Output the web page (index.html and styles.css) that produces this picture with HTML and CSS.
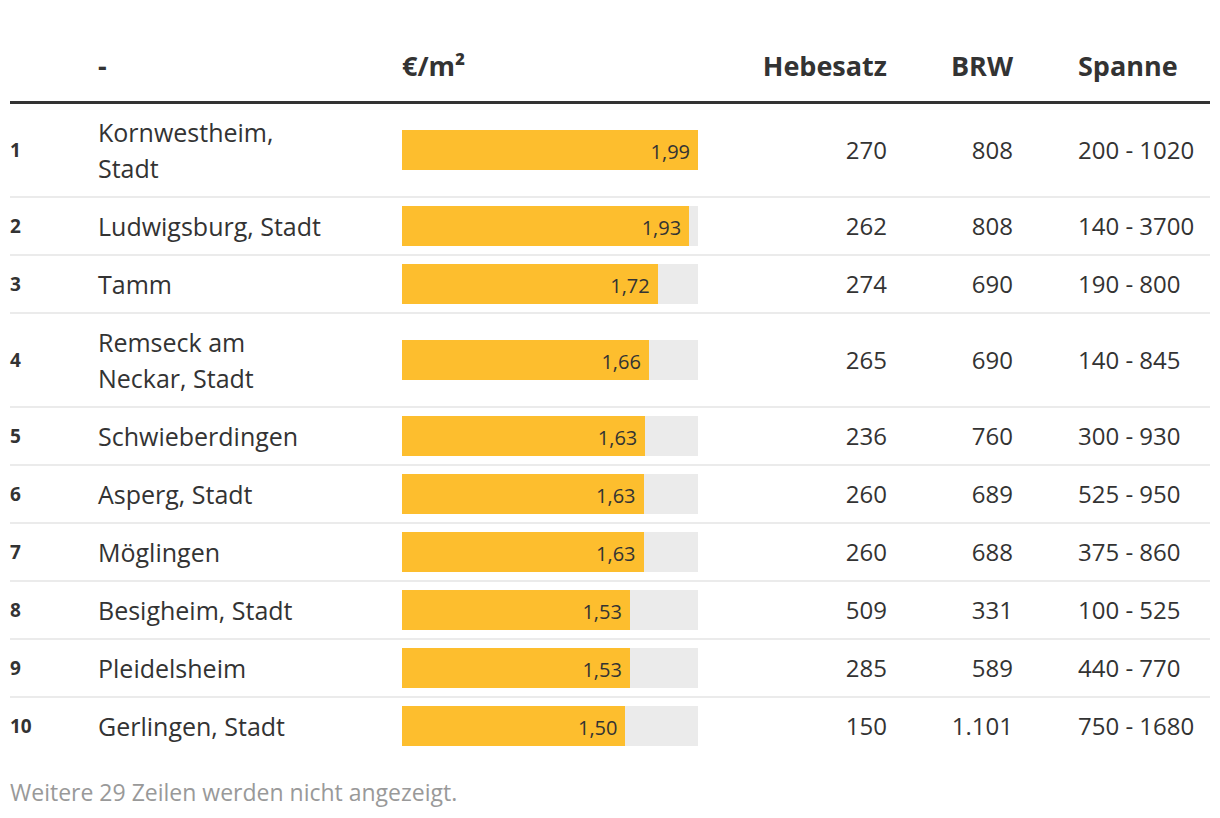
FILE: index.html
```html
<!DOCTYPE html>
<html lang="de">
<head>
<meta charset="utf-8">
<link rel="stylesheet" href="styles.css">
</head>
<body>
<div class="wrap">
<table class="tbl">
<colgroup>
<col class="c-rank"><col class="c-name"><col class="c-bar"><col class="c-heb"><col class="c-brw"><col class="c-sp">
</colgroup>
<thead>
<tr><th class="rank"></th><th class="name">-</th><th class="bar">€/m²</th><th class="num">Hebesatz</th><th class="num">BRW</th><th class="sp">Spanne</th></tr>
</thead>
<tbody>
<tr><td class="rank">1</td><td class="name">Kornwestheim,<br>Stadt</td><td class="bar"><div class="track"><div class="fill" style="width:100%">1,99</div></div></td><td class="num">270</td><td class="num">808</td><td class="sp">200 - 1020</td></tr>
<tr><td class="rank">2</td><td class="name">Ludwigsburg, Stadt</td><td class="bar"><div class="track"><div class="fill" style="width:97%">1,93</div></div></td><td class="num">262</td><td class="num">808</td><td class="sp">140 - 3700</td></tr>
<tr><td class="rank">3</td><td class="name">Tamm</td><td class="bar"><div class="track"><div class="fill" style="width:86.4%">1,72</div></div></td><td class="num">274</td><td class="num">690</td><td class="sp">190 - 800</td></tr>
<tr><td class="rank">4</td><td class="name">Remseck am<br>Neckar, Stadt</td><td class="bar"><div class="track"><div class="fill" style="width:83.4%">1,66</div></div></td><td class="num">265</td><td class="num">690</td><td class="sp">140 - 845</td></tr>
<tr><td class="rank">5</td><td class="name">Schwieberdingen</td><td class="bar"><div class="track"><div class="fill" style="width:82.2%">1,63</div></div></td><td class="num">236</td><td class="num">760</td><td class="sp">300 - 930</td></tr>
<tr><td class="rank">6</td><td class="name">Asperg, Stadt</td><td class="bar"><div class="track"><div class="fill" style="width:81.6%">1,63</div></div></td><td class="num">260</td><td class="num">689</td><td class="sp">525 - 950</td></tr>
<tr><td class="rank">7</td><td class="name">Möglingen</td><td class="bar"><div class="track"><div class="fill" style="width:81.6%">1,63</div></div></td><td class="num">260</td><td class="num">688</td><td class="sp">375 - 860</td></tr>
<tr><td class="rank">8</td><td class="name">Besigheim, Stadt</td><td class="bar"><div class="track"><div class="fill" style="width:77%">1,53</div></div></td><td class="num">509</td><td class="num">331</td><td class="sp">100 - 525</td></tr>
<tr><td class="rank">9</td><td class="name">Pleidelsheim</td><td class="bar"><div class="track"><div class="fill" style="width:77%">1,53</div></div></td><td class="num">285</td><td class="num">589</td><td class="sp">440 - 770</td></tr>
<tr><td class="rank">10</td><td class="name">Gerlingen, Stadt</td><td class="bar"><div class="track"><div class="fill" style="width:75.5%">1,50</div></div></td><td class="num">150</td><td class="num">1.101</td><td class="sp">750 - 1680</td></tr>
</tbody>
</table>
<p class="note">Weitere 29 Zeilen werden nicht angezeigt.</p>
</div>
</body>
</html>
```
FILE: styles.css
```css
html, body {
  margin: 0;
  padding: 0;
  background: #fff;
}
body {
  font-family: "Open Sans", "Liberation Sans", sans-serif;
  color: #333;
}
.wrap {
  padding: 0 10px;
}
.tbl {
  width: 1200px;
  border-collapse: collapse;
  table-layout: fixed;
}
.c-rank { width: 88px; }
.c-name { width: 304px; }
.c-bar { width: 296px; }
.c-heb { width: 189px; }
.c-brw { width: 126px; }
.c-sp { width: 197px; }

.tbl th {
  font-size: 27px;
  font-weight: 700;
  line-height: 34px;
  padding: 49px 0 18px;
  text-align: left;
  border-bottom: 3px solid #333;
  white-space: nowrap;
}
.tbl td {
  font-size: 24px;
  line-height: 36px;
  padding: 10px 0;
  border-bottom: 2px solid #ebebeb;
  vertical-align: middle;
  white-space: nowrap;
}
.tbl tbody tr:last-child td {
  border-bottom: none;
}
.tbl td.name {
  font-size: 25px;
}
.tbl .rank {
  font-size: 19px;
  font-weight: 700;
}
.tbl .num {
  text-align: right;
}
.tbl .sp {
  padding-left: 65px;
}
.track {
  height: 40px;
  margin: -2px 0;
  background: #ebebeb;
  display: flex;
}
.fill {
  height: 100%;
  background: #fdbe2e;
  box-sizing: border-box;
  padding-right: 8px;
  display: flex;
  align-items: center;
  justify-content: flex-end;
  font-size: 20px;
  padding-top: 4px;
  color: #333;
}
.note {
  margin: 21px 0 0;
  font-size: 23px;
  line-height: 34px;
  color: #999;
}
```
